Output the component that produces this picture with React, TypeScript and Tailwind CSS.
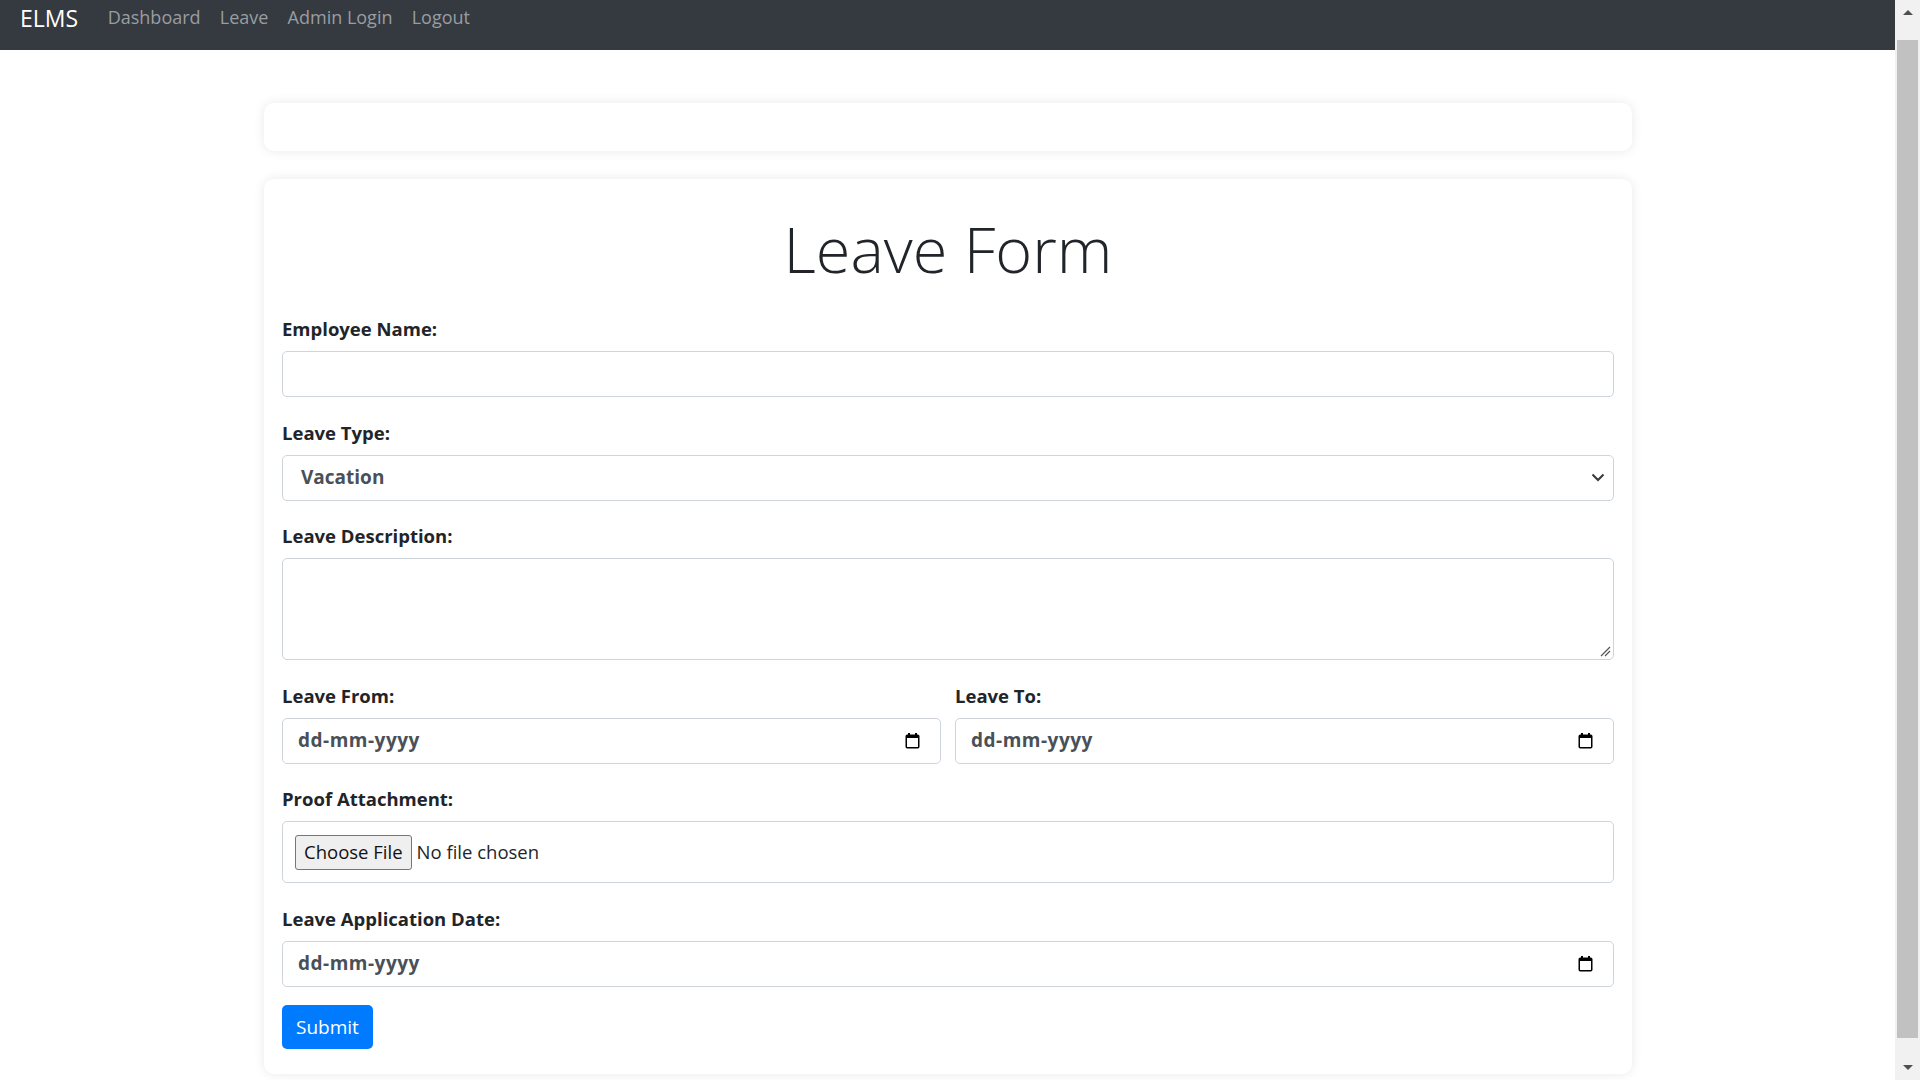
import React from 'react';

const navLinks = ['Dashboard', 'Leave', 'Admin Login', 'Logout'];

const CalendarIcon = () => (
  <svg width="15" height="17" viewBox="0 0 15 17" className="shrink-0">
    <rect x="1.25" y="3.25" width="12.5" height="12.5" rx="1" fill="none" stroke="#000" strokeWidth="1.5" />
    <rect x="1" y="3" width="13" height="3" fill="#000" />
    <rect x="3" y="1" width="2" height="3" fill="#000" />
    <rect x="10" y="1" width="2" height="3" fill="#000" />
  </svg>
);

const Label = ({ children }: { children: React.ReactNode }) => (
  <div className="mb-[8px] pt-[2px] text-[18.5px] font-bold leading-[29px] text-[#212529]">{children}</div>
);

const DateBox = () => (
  <div className="flex h-[46px] items-center justify-between rounded-[5px] border border-[#ced4da] bg-white pl-[15px] pr-[20px]">
    <span className="text-[19px] font-bold tracking-[0.5px] text-[#495057]">dd-mm-yyyy</span>
    <CalendarIcon />
  </div>
);

const Scrollbar = () => (
  <div className="flex w-[25px] shrink-0 flex-col bg-[#f1f1f1]">
    <div className="flex h-[25px] items-center justify-center">
      <div className="h-0 w-0 border-x-[5px] border-b-[5px] border-x-transparent border-b-[#505050]" />
    </div>
    <div className="flex-1 px-[2px] pt-[15px]">
      <div className="h-[998px] bg-[#c1c1c1]" />
    </div>
    <div className="flex h-[25px] items-center justify-center">
      <div className="h-0 w-0 border-x-[5px] border-t-[5px] border-x-transparent border-t-[#505050]" />
    </div>
  </div>
);

export default function App() {
  return (
    <div className="flex h-[1080px] w-[1920px] overflow-hidden bg-white font-['Open_Sans',sans-serif] text-[#212529]">
      <div className="flex min-w-0 flex-1 flex-col">
        <nav className="flex h-[50px] shrink-0 items-start bg-[#343a40] px-[20px] pt-[3px]">
          <span className="mr-[20px] text-[23px] leading-[31px] text-white">ELMS</span>
          {navLinks.map((l) => (
            <a key={l} className="px-[9.6px] text-[18px] leading-[29px] text-[#9a9da0]">
              {l}
            </a>
          ))}
        </nav>

        <main className="ml-[264px] w-[1368px] pt-[53px]">
          <div className="mb-[28px] h-[48px] rounded-[10px] bg-white shadow-[0_0_12px_rgba(0,0,0,0.09)]" />

          <div className="rounded-[10px] bg-white px-[18px] pb-[25px] pt-[30px] shadow-[0_0_12px_rgba(0,0,0,0.09)]">
            <h1 className="mb-[23px] text-center text-[63px] font-light leading-[80px] text-[#212529]">Leave Form</h1>

            <div className="mb-[18.5px]">
              <Label>Employee Name:</Label>
              <div className="h-[46px] rounded-[5px] border border-[#ced4da] bg-white" />
            </div>

            <div className="mb-[18.5px]">
              <Label>Leave Type:</Label>
              <div className="flex h-[46px] items-center justify-between rounded-[5px] border border-[#ced4da] bg-white pl-[18px] pr-[8px]">
                <span className="text-[19px] font-bold text-[#495057]">Vacation</span>
                <svg width="14" height="9" viewBox="0 0 14 9">
                  <path d="M1.5 1.5 L7 7 L12.5 1.5" fill="none" stroke="#343a40" strokeWidth="2" />
                </svg>
              </div>
            </div>

            <div className="mb-[18.5px]">
              <Label>Leave Description:</Label>
              <div className="relative h-[102px] rounded-[5px] border border-[#ced4da] bg-white">
                <svg width="12" height="12" viewBox="0 0 12 12" className="absolute bottom-[2px] right-[2px]">
                  <path d="M11 2 L2 11 M11 6 L6 11" stroke="#555" strokeWidth="1.2" />
                </svg>
              </div>
            </div>

            <div className="mb-[18.5px] grid grid-cols-2 gap-x-[14px]">
              <div>
                <Label>Leave From:</Label>
                <DateBox />
              </div>
              <div>
                <Label>Leave To:</Label>
                <DateBox />
              </div>
            </div>

            <div className="mb-[18.5px]">
              <Label>Proof Attachment:</Label>
              <div className="flex h-[62px] items-center rounded-[5px] border border-[#ced4da] bg-white pl-[12px]">
                <span className="flex h-[35px] items-center rounded-[3px] border border-[#767676] bg-[#efefef] px-[8px] text-[18.5px] text-[#111]">
                  Choose File
                </span>
                <span className="ml-[5px] text-[18.5px] text-[#212529]">No file chosen</span>
              </div>
            </div>

            <div className="mb-[18.5px]">
              <Label>Leave Application Date:</Label>
              <DateBox />
            </div>

            <button className="h-[44px] rounded-[5px] bg-[#007bff] px-[14px] text-[19px] leading-[28px] text-white">
              Submit
            </button>
          </div>
        </main>
      </div>
      <Scrollbar />
    </div>
  );
}
